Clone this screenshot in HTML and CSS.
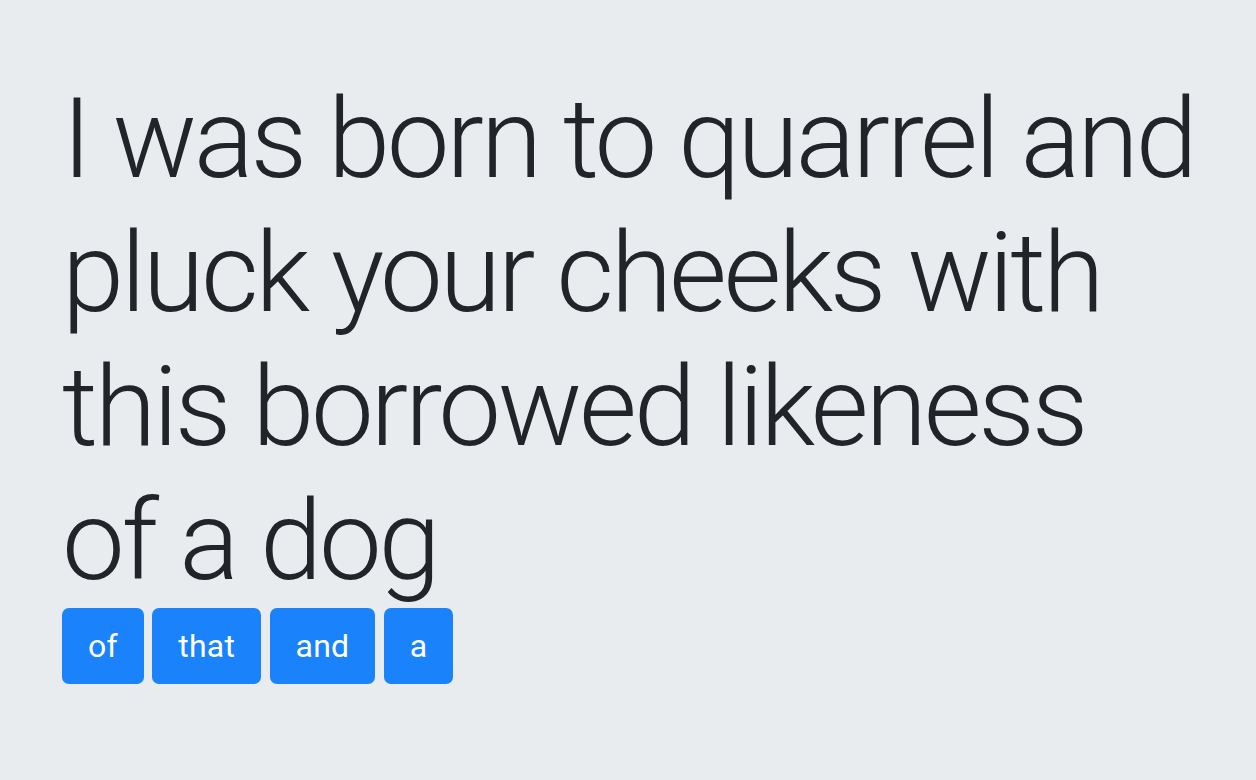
FILE: index.html
```html
<!DOCTYPE html>
<html>
<head>
<meta charset="utf-8">
<link rel="stylesheet" href="styles.css">
</head>
<body>
<main class="page">
  <h1 class="quote">I was born to quarrel and pluck your cheeks with this borrowed likeness of a dog</h1>
  <div class="words">
    <button class="word">of</button>
    <button class="word">that</button>
    <button class="word">and</button>
    <button class="word">a</button>
  </div>
</main>
</body>
</html>
```
FILE: styles.css
```css
html, body {
  margin: 0;
  padding: 0;
  background: #e9ecef;
}
.page {
  padding: 72px 40px 0 62px;
  font-family: Roboto, "Noto Sans", sans-serif;
}
.quote {
  margin: 0;
  max-width: 1134px;
  font-size: 112px;
  font-weight: 300;
  line-height: 134px;
  letter-spacing: -3.3px;
  color: #212529;
}
.words {
  display: flex;
  gap: 8.5px;
}
.word {
  height: 76px;
  padding: 0 26px;
  border: none;
  border-radius: 7px;
  background: #1a82fb;
  color: #fff;
  font-family: Roboto, "Noto Sans", sans-serif;
  font-size: 32px;
  font-weight: 400;
  letter-spacing: 0.2px;
}
```
